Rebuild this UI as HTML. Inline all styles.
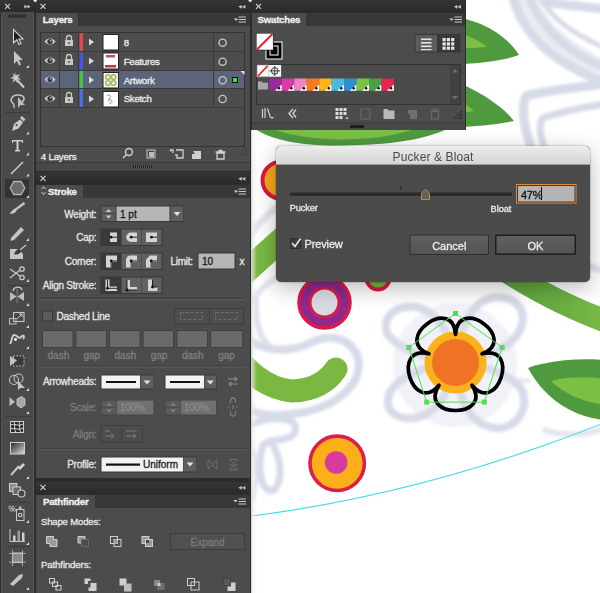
<!DOCTYPE html>
<html><head><meta charset="utf-8">
<style>
*{margin:0;padding:0;box-sizing:border-box}
html,body{width:600px;height:593px;overflow:hidden;background:#fff;font-family:"Liberation Sans",sans-serif}
.a{position:absolute}
#canvas{position:absolute;left:0;top:0;width:600px;height:593px}
.hdr{position:absolute;background:linear-gradient(#353535,#2a2a2a);height:12px}
.x{position:absolute;color:#d0d0d0;font-size:11px;line-height:11px;font-weight:bold}
.tabbar{position:absolute;background:#383838;height:14px}
.tab{position:absolute;background:#4c4c4c;color:#f0f0f0;font-size:11px;font-weight:bold;line-height:14px;padding-left:5px}
.body{position:absolute;background:#4c4c4c}
.lbl{position:absolute;color:#e6e6e6;font-size:10.5px;line-height:12px;white-space:nowrap}
.dis{color:#7a7a7a}
.t{position:absolute;white-space:nowrap;line-height:1;-webkit-text-stroke:0.3px currentColor}
.tt{font-size:9.7px;font-weight:bold;color:#f2f2f2;letter-spacing:-0.25px}
.btn{position:absolute;background:#5c5c5c;border:1px solid #3a3a3a}
</style></head><body>
<svg id="canvas" width="600" height="593" viewBox="0 0 600 593">
<defs><filter id="bl" x="-20%" y="-20%" width="140%" height="140%"><feGaussianBlur stdDeviation="1.7"/></filter>
<filter id="bl2" x="-20%" y="-20%" width="140%" height="140%"><feGaussianBlur stdDeviation="0.6"/></filter></defs>
<rect x="0" y="0" width="600" height="593" fill="#ffffff"/>
<g fill="none" stroke="#cdd1e2" stroke-linecap="round" stroke-linejoin="round" filter="url(#bl)" opacity="0.8">
 <!-- top-right swirl -->
 <path d="M521 -8 C532 25 556 50 605 73" stroke-width="24" stroke="#e3e6ef"/>
 <path d="M512 -5 C520 25 540 50 570 66 C585 74 595 80 605 84" stroke-width="9"/>
 <path d="M528 -5 C538 20 555 40 580 55 C590 61 598 66 605 68" stroke-width="8"/>
 <path d="M540 -2 C552 18 570 32 605 48" stroke-width="5"/>
 <path d="M545 2 C565 5 585 7 605 9" stroke-width="9"/>
 <path d="M605 84 C575 88 545 90 526 96 C520 110 525 130 532 150" stroke-width="9"/>
 <path d="M605 104 C580 108 560 112 543 118 C538 125 540 135 545 150" stroke-width="7"/>
 <!-- halo around C -->
 <path d="M252 232 C260 222 268 214 276 208" stroke-width="7" opacity="0.7"/><path d="M252 300 C258 292 266 284 276 278" stroke-width="6" opacity="0.7"/>
 <path d="M252 342 C270 352 292 352 310 343 C328 334 348 336 357 355 C366 380 340 406 300 413 C278 417 262 415 251 411" stroke-width="8"/>
 <path d="M256 300 C255 320 258 335 268 345" stroke-width="6" opacity="0.8"/>
 <!-- quatrefoil behind flower -->
 <circle cx="455" cy="365" r="62" fill="#e9ebf2" stroke="none" opacity="0.8"/>
 <path d="M455 362 C430 360 400 350 388 335 C380 318 395 305 415 307 C435 310 450 330 455 362 Z" stroke-width="8"/>
 <path d="M455 362 C460 330 470 300 495 297 C518 296 528 312 520 330 C510 350 480 360 455 362 Z" stroke-width="8"/>
 <path d="M455 362 C430 365 400 375 390 392 C383 410 395 420 415 418 C435 415 450 395 455 362 Z" stroke-width="8"/>
 <path d="M455 362 C480 365 510 372 522 390 C530 410 515 430 495 428 C470 425 458 400 455 362 Z" stroke-width="8"/>
 <!-- bottom-left petal sketch -->
 <path d="M252 424 C272 416 300 416 295 432 C290 442 272 438 263 445 C256 470 262 495 274 490 C284 480 281 455 270 441" stroke-width="7"/>
 <path d="M252 450 C258 465 258 480 252 500" stroke-width="5" opacity="0.7"/>
 <!-- right misc -->
 <path d="M560 265 C575 260 590 266 605 272" stroke-width="7" opacity="0.7"/>
 <path d="M545 430 C560 436 585 436 605 428" stroke-width="6" opacity="0.7"/><path d="M518 380 L528 381" stroke-width="5" opacity="0.6"/>
</g>
<!-- top leaf peeking below swatches -->
<path d="M251 95 L470 95 L470 120 L449 128 C425 140 390 145 340 145.5 C300 146 270 140 252 127 Z" fill="#4f9a3f"/>
<path d="M266 100 L418 100 L418 128 C395 136 370 139.5 340 139.5 C312 139.5 288 135 266 127 Z" fill="#7cbf45"/>
<!-- leaves right of swatches -->
<path d="M462 18 C490 25 508 38 519 55 C505 60 485 63 462 64 Z" fill="#4f9a3f"/>
<path d="M462 34 C475 38 482 43 487 47 C478 48 470 48 462 48 Z" fill="#7cbf45"/>
<path d="M462 84 C485 95 503 107 514 121 C500 124 482 126 462 127 Z" fill="#4f9a3f"/>
<path d="M462 102 C467 105 470 108 474 111 C470 112 466 112 462 112 Z" fill="#7cbf45"/>
<!-- orange ring top-left -->
<circle cx="281" cy="180.2" r="18.5" fill="#f6a81c" stroke="#d7193f" stroke-width="4"/>
<!-- green band ring left -->
<path d="M222 293 L300 222.7" fill="none" stroke="#7ab842" stroke-width="24"/><path d="M230 348 Q258 388 292 391 Q322 390 336 369" fill="none" stroke="#7ab842" stroke-width="23" stroke-linecap="round"/>
<!-- purple ring -->
<circle cx="324.5" cy="302.5" r="20" fill="none" stroke="#8c2a8f" stroke-width="9"/>
<circle cx="324.5" cy="302.5" r="25.5" fill="none" stroke="#d91a4a" stroke-width="3.5"/>
<circle cx="324.5" cy="302.5" r="14.5" fill="#d9dbe2" stroke="#d91a4a" stroke-width="3"/>
<!-- small green ring -->
<circle cx="378" cy="278" r="11.5" fill="#7ab842" stroke="#d91a4a" stroke-width="4"/>
<!-- green band right -->
<defs><linearGradient id="bandg" x1="500" y1="0" x2="600" y2="0" gradientUnits="userSpaceOnUse"><stop offset="0" stop-color="#58a03e"/><stop offset="1" stop-color="#78b945"/></linearGradient></defs><path d="M460 240 C500 268 550 303 620 326" fill="none" stroke="url(#bandg)" stroke-width="23"/>
<!-- right leaf -->
<path d="M528 368 C550 360 580 358 605 360 L605 420 C575 418 545 400 528 368 Z" fill="#4f9a3f"/>
<path d="M551 381 C570 376 590 377 605 379 L605 405 C585 402 565 395 551 381 Z" fill="#7cbf45"/>
<!-- flower -->
<circle cx="455.5" cy="362.5" r="31" fill="#f9b21b"/>
<circle cx="455.5" cy="362.5" r="23.5" fill="#f07224"/>
<path d="M455.5 334.5 C457.9 294.5 519.4 339.2 482.1 353.8 C520.9 343.8 497.4 416.1 472.0 385.2 C493.5 418.9 417.5 418.9 439.0 385.2 C413.6 416.1 390.1 343.8 428.9 353.8 C391.6 339.2 453.1 294.5 455.5 334.5Z" fill="none" stroke="#000" stroke-width="3.7" stroke-linejoin="round"/>
<polygon points="455.5,313.5 502.1,347.4 484.3,402.1 426.7,402.1 408.9,347.4" fill="none" stroke="#4ee04e" stroke-width="1"/>
<g fill="#4ee04e"><rect x="453" y="311" width="5" height="5"/><rect x="499.6" y="344.9" width="5" height="5"/><rect x="481.8" y="399.6" width="5" height="5"/><rect x="424.2" y="399.6" width="5" height="5"/><rect x="406.4" y="344.9" width="5" height="5"/></g>
<!-- bottom circle -->
<circle cx="337.2" cy="463.3" r="27.2" fill="#fbb01a" stroke="#dc1f4a" stroke-width="3.6"/>
<circle cx="336.2" cy="462.5" r="11.3" fill="#d93aa0"/>
<!-- cyan arc -->
<path d="M250 516.3 Q427.5 493.6 605 422.5" fill="none" stroke="#47dbe9" stroke-width="1.1"/>
</svg>

<!-- toolbar -->
<div class="a" style="left:0;top:0;width:36px;height:593px;background:#2e2e2e"></div>
<div class="a" style="left:1px;top:12px;width:33px;height:581px;background:#4a4a4a;border-left:1px solid #555;border-right:1px solid #575757"></div>
<div class="hdr" style="left:0;top:0;width:35px"></div>
<svg class="a" style="left:0;top:0" width="36" height="593" viewBox="0 0 36 593">
 <g stroke="#d4d4d4" stroke-width="1.1" fill="none"><path d="M5 3.8l5 5M10 3.8l-5 5"/></g>
 <g fill="#c8c8c8"><path d="M24.3 4.7l3.1 1.95-3.1 1.95z M27.4 4.7l3.1 1.95-3.1 1.95z"/></g>
 <g fill="#1e1e1e"><rect x="8.5" y="14.5" width="1.2" height="3.2"/><rect x="10.5" y="14.5" width="1.2" height="3.2"/><rect x="12.5" y="14.5" width="1.2" height="3.2"/><rect x="14.5" y="14.5" width="1.2" height="3.2"/><rect x="16.5" y="14.5" width="1.2" height="3.2"/><rect x="18.5" y="14.5" width="1.2" height="3.2"/><rect x="20.5" y="14.5" width="1.2" height="3.2"/><rect x="22.5" y="14.5" width="1.2" height="3.2"/><rect x="24.5" y="14.5" width="1.2" height="3.2"/></g>
 <g stroke="#3c3c3c" stroke-width="1"><line x1="5" y1="112.5" x2="30" y2="112.5"/><line x1="5" y1="285.5" x2="30" y2="285.5"/><line x1="5" y1="416.5" x2="30" y2="416.5"/><line x1="5" y1="502.5" x2="30" y2="502.5"/><line x1="5" y1="546.5" x2="30" y2="546.5"/></g>
 <rect x="5" y="179" width="24" height="19" fill="#343434"/>
 <!-- selection -->
 <path d="M13.5 29.5 L13.5 43 L16.8 39.8 L19 44.5 L21 43.5 L18.8 39 L23 39 Z" fill="#1e1e1e" stroke="#d4d4d4" stroke-width="1.1"/>
 <!-- direct selection -->
 <path d="M14 51 L14 64 L17 61 L19 65.5 L21 64.5 L19 60 L23 60 Z" fill="#c4c4c4"/>
 <!-- magic wand -->
 <g fill="#c8c8c8"><path d="M15.5 72l1.2 3.5 3.6-1.4-2.3 3.1 3.1 2.2-3.7 0.2 0.2 3.7-2.2-3-3 2.3 1.3-3.6-3.6-1.2 3.6-1.1-1.3-3.6 3 2.3z"/></g>
 <path d="M17 80 L24 87.5" stroke="#c8c8c8" stroke-width="2.2"/>
 <!-- lasso -->
 <g fill="none" stroke="#c4c4c4" stroke-width="1.5"><path d="M14 104 C9 101 11 95 18 95 C24 95 26 99 22 102"/><path d="M14 104 C13 107 15 107 14 108"/></g>
 <path d="M18 97 L18 108 L20.5 105 L25 105 Z" fill="#bdbdbd"/>
 <!-- pen -->
 <path d="M12 131 L14 124 L20 119.5 L23 122.5 L18.5 128.5 Z" fill="#c8c8c8"/>
 <path d="M20 118 L22 116 L25.5 119.5 L23.5 121.5 Z" fill="#c8c8c8"/>
 <circle cx="16.5" cy="125" r="0.9" fill="#333"/>
 <!-- T -->
 <path d="M12 140 H23 V143 H22 V141.5 H18.5 V150 H20 V151.5 H15 V150 H16.5 V141.5 H13 V143 H12 Z" fill="#cfcfcf"/>
 <!-- line -->
 <path d="M11 174 L23 162" stroke="#cfcfcf" stroke-width="1.4"/>
 <!-- polygon -->
 <path d="M13.8 181.5 H21.2 L24.8 188 L21.2 194.5 H13.8 L10.2 188 Z" fill="#6a6a6a" stroke="#b4b4b4" stroke-width="1.3"/>
 <!-- brush -->
 <path d="M15 210 L24.5 203" stroke="#c4c4c4" stroke-width="2.2"/>
 <path d="M9.5 214 C12 211 14 208 16 209 C17.5 211 15 214 9.5 214 Z" fill="#c8c8c8"/>
 <!-- pencil -->
 <path d="M11 238 L21 227 L24 230 L14 240 L10.5 241 Z" fill="#c4c4c4"/>
 <!-- blob brush -->
 <path d="M10 249 H19 L23 254 V259 H10 Z" fill="#c4c4c4"/>
 <path d="M14 254 C16 249 21 247 23 248 C22 252 18 256 14 254 Z" fill="#3c3c3c"/>
 <path d="M20 250 L26 245" stroke="#c4c4c4" stroke-width="1.3"/>
 <!-- scissors -->
 <g fill="none" stroke="#c8c8c8" stroke-width="1.3"><circle cx="22" cy="269" r="2.2"/><circle cx="22" cy="277.5" r="2.2"/><path d="M10 269 L20 276 M10 278 L20 270"/></g>
 <!-- reflect -->
 <path d="M10 292 L16.5 296.5 L10 301 Z M24 292 L17.5 296.5 L24 301 Z" fill="#bdbdbd"/>
 <path d="M13 291 C14 286 21 286 22 290" fill="none" stroke="#c8c8c8" stroke-width="1.3"/>
 <path d="M17 287 V303" stroke="#c8c8c8" stroke-width="0.8" stroke-dasharray="1.2 1.2"/>
 <!-- scale -->
 <rect x="13.5" y="312.5" width="10.5" height="9" fill="none" stroke="#c8c8c8" stroke-width="1.1"/>
 <rect x="9.5" y="318.5" width="6.5" height="5.5" fill="none" stroke="#bcbcbc" stroke-width="1"/>
 <path d="M17 319 L22 314 M19 314 H22 V317" stroke="#c8c8c8" stroke-width="1" fill="none"/>
 <!-- warp -->
 <path d="M10 344 C13 339 11 336 14 335 C17 334 18 340 21 337 C24 334 25 337 23 339" fill="none" stroke="#c8c8c8" stroke-width="2"/>
 <circle cx="15.5" cy="339.5" r="1.4" fill="#fff"/>
 <!-- free transform -->
 <rect x="13.5" y="356" width="10.5" height="10" fill="#3a3a3a" stroke="#c8c8c8" stroke-width="1" stroke-dasharray="1.5 1.5"/>
 <path d="M10 356 L17 360.5 L10 366 Z" fill="#c4c4c4"/>
 <!-- shape builder -->
 <g fill="none" stroke="#c4c4c4" stroke-width="1.1"><circle cx="14" cy="380" r="4.5"/><circle cx="18.5" cy="378.5" r="4.5"/></g>
 <path d="M18 381 L18 390 L20.5 388 L25 388 Z" fill="#c4c4c4"/>
 <!-- perspective -->
 <path d="M9.5 397 L15 402 L9.5 406 Z" fill="#bdbdbd"/>
 <path d="M17 399 L21.5 396.5 L25 399 L25 405 L21 408 L17 405 Z" fill="#a8a8a8" stroke="#cfcfcf" stroke-width="0.8"/>
 <!-- mesh -->
 <rect x="10.5" y="421.5" width="13" height="11" fill="#2a2a2a" stroke="#cfcfcf" stroke-width="1"/>
 <path d="M11 425 C14 423 18 427 23 424 M11 429 C14 427 18 431 23 428 M14 422 C16 426 13 429 16 432 M19 422 C21 426 18 429 21 432" stroke="#e0e0e0" stroke-width="1" fill="none"/>
 <!-- gradient -->
 <defs><linearGradient id="gr" x1="0" x2="1" y1="0" y2="1"><stop offset="0" stop-color="#222"/><stop offset="1" stop-color="#ddd"/></linearGradient></defs>
 <rect x="10.5" y="442.5" width="14" height="11.5" fill="url(#gr)" stroke="#cfcfcf" stroke-width="1"/>
 <!-- eyedropper -->
 <path d="M11 475 L19 466" stroke="#c8c8c8" stroke-width="2" />
 <path d="M18 468 L23 463 L25 465 L20 470 Z" fill="#d0d0d0"/>
 <!-- blend -->
 <rect x="9.5" y="483.5" width="7.5" height="8" fill="#8c8c8c" stroke="#d0d0d0" stroke-width="1"/>
 <rect x="13" y="487" width="7.5" height="7.5" fill="#6a6a6a" stroke="#c8c8c8" stroke-width="1"/>
 <circle cx="21.5" cy="493.5" r="3.5" fill="#444" stroke="#c8c8c8" stroke-width="1.2"/>
 <!-- symbol sprayer -->
 <g fill="none" stroke="#bbbbbb" stroke-width="0.9"><circle cx="10" cy="507.5" r="1.3"/><circle cx="13" cy="507.5" r="1.3"/><circle cx="11.5" cy="510" r="1.3"/><circle cx="14.5" cy="510" r="1.3"/></g>
 <rect x="16.5" y="509.5" width="7.5" height="11" fill="none" stroke="#c8c8c8" stroke-width="1"/>
 <rect x="19" y="506.5" width="2.5" height="3" fill="#bbb"/>
 <circle cx="20.2" cy="515" r="1.8" fill="none" stroke="#d0d0d0" stroke-width="1.1"/>
 <!-- graph -->
 <path d="M10 529 V541.5 H25" stroke="#c8c8c8" stroke-width="1" fill="none"/>
 <rect x="13" y="535.5" width="2.5" height="5.5" fill="#cfcfcf"/><rect x="17.5" y="530.5" width="2.5" height="10.5" fill="#9a9a9a"/><rect x="22" y="532.5" width="2.5" height="8.5" fill="#cfcfcf"/>
 <!-- artboard -->
 <rect x="12.5" y="553" width="10" height="9.5" fill="#8a8a8a" stroke="#cfcfcf" stroke-width="1"/>
 <path d="M9 553.5 H26 M9 562 H26 M12.5 550 V566 M22.5 550 V566" stroke="#bdbdbd" stroke-width="0.8"/>
 <!-- slice -->
 <path d="M10 584 L19 575 L23 574 L22 578 L13 586 Z" fill="#c4c4c4"/>
 <!-- flyout triangles -->
 <g fill="#d8d8d8"><path d="M29 65 v3h-3z M29 131.5 v3h-3z M29 152.5 v3h-3z M29 173.5 v3h-3z M29 195 v3h-3z M29 238 v3h-3z M29 279 v3h-3z M29 303 v3h-3z M29 325 v3h-3z M29 346 v3h-3z M29 388 v3h-3z M29 411 v3h-3z M29 476 v3h-3z M29 520 v3h-3z M29 542 v3h-3z M29 587 v3h-3z"/></g>
</svg>

<!-- panel column -->
<div class="a" style="left:35px;top:0;width:216px;height:593px;background:#2c2c2c"></div>

<!-- Layers -->
<div class="hdr" style="left:36px;top:0;width:214px"></div>
<div class="tabbar" style="left:36px;top:12.5px;width:214px"></div>
<div class="tab" style="left:36px;top:12.5px;width:42px;height:14px"></div><div class="t tt" style="left:42.7px;top:15.3px">Layers</div>
<div class="body" style="left:36px;top:26px;width:214px;height:136px"></div>
<div class="a" style="left:36px;top:162px;width:214px;height:9px;background:#484848;border-top:1px solid #3a3a3a"></div>

<svg class="a" style="left:36px;top:0" width="214" height="26" viewBox="0 0 214 26">
 <g stroke="#d4d4d4" stroke-width="1.1" fill="none"><path d="M4.5 3.8l5 5M9.5 3.8l-5 5"/></g>
 <g fill="#c8c8c8"><path d="M205.8 4.9l-3.5 1.95 3.5 1.95z M209.4 4.9l-3.5 1.95 3.5 1.95z"/></g>
 <path d="M198 18.5 h4 l-2 2.5z" fill="#d0d0d0"/><g stroke="#c8c8c8" stroke-width="1"><line x1="202.5" y1="17" x2="210" y2="17"/><line x1="202.5" y1="19.5" x2="210" y2="19.5"/><line x1="202.5" y1="22" x2="210" y2="22"/></g>
</svg>
<!-- layer table -->
<div class="a" style="left:40px;top:32px;width:205px;height:115px;background:#4d4d4d;border:1px solid #333"></div>
<div class="a" style="left:41px;top:70px;width:203px;height:19px;background:#5b6479"></div>
<svg class="a" style="left:36px;top:26px" width="214" height="136" viewBox="0 0 214 136">
 <g stroke="#3a3a3a" stroke-width="1"><line x1="5" y1="25.5" x2="209" y2="25.5"/><line x1="5" y1="44.5" x2="209" y2="44.5"/><line x1="5" y1="62.5" x2="209" y2="62.5"/><line x1="5" y1="81.5" x2="209" y2="81.5"/>
 <line x1="23.5" y1="7" x2="23.5" y2="81"/><line x1="42.5" y1="7" x2="42.5" y2="81"/><line x1="177.5" y1="7" x2="177.5" y2="81"/></g>
 <rect x="43.5" y="7" width="3.5" height="18" fill="#e14a48"/>
 <rect x="43.5" y="26" width="3.5" height="18" fill="#4455e0"/>
 <rect x="43.5" y="45" width="3.5" height="17" fill="#44c644"/>
 <rect x="43.5" y="63" width="3.5" height="18" fill="#4a6fe0"/>
 <!-- eyes -->
 <g id="eye"><path d="M8.5 15.5 C11 11.5 17 11.5 19.5 15.5 C17 19.5 11 19.5 8.5 15.5Z" fill="#c8c8c8"/><circle cx="14" cy="15.5" r="2.6" fill="#3a3a3a"/><circle cx="14.7" cy="14.7" r="0.8" fill="#ddd"/></g>
 <g transform="translate(0,19)"><path d="M8.5 15.5 C11 11.5 17 11.5 19.5 15.5 C17 19.5 11 19.5 8.5 15.5Z" fill="#c8c8c8"/><circle cx="14" cy="15.5" r="2.6" fill="#3a3a3a"/><circle cx="14.7" cy="14.7" r="0.8" fill="#ddd"/></g><g transform="translate(0,38)"><path d="M8.5 15.5 C11 11.5 17 11.5 19.5 15.5 C17 19.5 11 19.5 8.5 15.5Z" fill="#c8c8c8"/><circle cx="14" cy="15.5" r="2.6" fill="#3a3a3a"/><circle cx="14.7" cy="14.7" r="0.8" fill="#ddd"/></g><g transform="translate(0,57)"><path d="M8.5 15.5 C11 11.5 17 11.5 19.5 15.5 C17 19.5 11 19.5 8.5 15.5Z" fill="#c8c8c8"/><circle cx="14" cy="15.5" r="2.6" fill="#3a3a3a"/><circle cx="14.7" cy="14.7" r="0.8" fill="#ddd"/></g>
 <!-- locks -->
 <g id="lock"><path d="M30.5 14 v-2 a2.5 2.5 0 0 1 5 0 v2" fill="none" stroke="#c8c8c8" stroke-width="1.3"/><rect x="29" y="14" width="8" height="6" fill="#c8c8c8"/><rect x="32.3" y="16" width="1.4" height="2" fill="#555"/></g>
 <g transform="translate(0,19)"><path d="M30.5 14 v-2 a2.5 2.5 0 0 1 5 0 v2" fill="none" stroke="#c8c8c8" stroke-width="1.3"/><rect x="29" y="14" width="8" height="6" fill="#c8c8c8"/><rect x="32.3" y="16" width="1.4" height="2" fill="#555"/></g><g transform="translate(0,57)"><path d="M30.5 14 v-2 a2.5 2.5 0 0 1 5 0 v2" fill="none" stroke="#c8c8c8" stroke-width="1.3"/><rect x="29" y="14" width="8" height="6" fill="#c8c8c8"/><rect x="32.3" y="16" width="1.4" height="2" fill="#555"/></g>
 <!-- arrows -->
 <g fill="#dcdcdc"><path d="M53 12.5 l5 3.5 -5 3.5z"/><path d="M53 31.5 l5 3.5 -5 3.5z"/><path d="M53 50.5 l5 3.5 -5 3.5z"/><path d="M53 69.5 l5 3.5 -5 3.5z"/></g>
 <!-- thumbs -->
 <rect x="67" y="8.5" width="15.5" height="15.5" fill="#fff" stroke="#222" stroke-width="1"/>
 <rect x="67" y="27" width="15.5" height="16" fill="#fff" stroke="#222" stroke-width="1"/>
 <rect x="70" y="29" width="9" height="2.5" fill="#d24a5a"/><rect x="69" y="39" width="11" height="2.5" fill="#c8303e"/>
 <rect x="67" y="46.5" width="15.5" height="15.5" fill="#f4f4e8" stroke="#222" stroke-width="1"/>
 <g fill="none" stroke="#a8b868" stroke-width="1.6"><circle cx="72" cy="51" r="2.3"/><circle cx="77.5" cy="51" r="2.3"/><circle cx="72" cy="57" r="2.3"/><circle cx="77.5" cy="57" r="2.3"/></g>
 <rect x="67" y="65.5" width="15.5" height="15.5" fill="#fff" stroke="#222" stroke-width="1"/>
 <path d="M71 69 c4 0 5 2 2 4 c4 1 4 4 0 5 M74 72 c-2 1 -2 3 0 4" fill="none" stroke="#7a90c8" stroke-width="1"/>
 <!-- target circles -->
 <g fill="none" stroke="#c4c4c4" stroke-width="1.4"><circle cx="186.6" cy="16.7" r="3.6"/><circle cx="186.6" cy="35.7" r="3.6"/><circle cx="186.6" cy="54.2" r="3.6"/><circle cx="186.6" cy="73" r="3.6"/></g>
 <rect x="196.5" y="51.5" width="5" height="5" fill="#44dd44" stroke="#111" stroke-width="1"/>
 <path d="M204.5 45 h4 v4z" fill="#e8e8e8"/>
 <!-- footer icons -->
 <g fill="none" stroke="#cfcfcf" stroke-width="1.4"><circle cx="93" cy="126" r="3.5"/><path d="M90.5 128.5 L87 132"/></g>
 <g fill="#bdbdbd"><rect x="111" y="124" width="8" height="8" fill="none" stroke="#c8c8c8" stroke-width="1"/><rect x="113" y="126" width="5" height="5"/></g>
 <path d="M134 124 h3 v3 M135 125.5 l-1 -1.5 M140 124 h7 v8 h-6 v-3 h-2" fill="none" stroke="#d0d0d0" stroke-width="1.3"/>
 <path d="M157 125 h8 v8 h-9 v-5 h3z" fill="#d0d0d0"/>
 <path d="M179.5 126 h10 M181 127 h7 v6 h-7z M182.5 124.5 h4" fill="none" stroke="#d0d0d0" stroke-width="1.3"/>
 <g fill="#3c3c3c"><path d="M210 122 v7 h-7z"/></g>
 <g stroke="#6a6a6a" stroke-width="0.8"><path d="M205 128.5 l4.5-4.5 M207 128.5 l2.5-2.5"/></g>
</svg>
<div class="t" style="left:123.7px;top:38.3px;font-size:9.7px;color:#ececec;letter-spacing:-0.3px">8</div>
<div class="t" style="left:123.7px;top:57.2px;font-size:9.7px;color:#ececec;letter-spacing:-0.3px">Features</div>
<div class="t" style="left:123.7px;top:75.5px;font-size:9.7px;color:#ececec;letter-spacing:-0.3px">Artwork</div>
<div class="t" style="left:123.7px;top:94.3px;font-size:9.7px;color:#ececec;letter-spacing:-0.3px">Sketch</div>
<div class="t" style="left:40.8px;top:152.0px;font-size:9.7px;color:#ececec;letter-spacing:-0.2px">4 Layers</div>
<svg class="a" style="left:130px;top:164px" width="26" height="6"><g fill="#1e1e1e"><rect x="3" y="1" width="19" height="3"/></g><g fill="#5a5a5a"><rect x="4" y="1" width="1" height="3"/><rect x="6" y="1" width="1" height="3"/><rect x="8" y="1" width="1" height="3"/><rect x="10" y="1" width="1" height="3"/><rect x="12" y="1" width="1" height="3"/><rect x="14" y="1" width="1" height="3"/><rect x="16" y="1" width="1" height="3"/><rect x="18" y="1" width="1" height="3"/><rect x="20" y="1" width="1" height="3"/></g></svg>

<!-- Stroke -->
<div class="hdr" style="left:36px;top:172px;width:214px"></div>
<div class="tabbar" style="left:36px;top:184.5px;width:214px"></div>
<div class="tab" style="left:36px;top:184.5px;width:46.5px;height:14px"></div><div class="t tt" style="left:48px;top:187.0px">Stroke</div>
<div class="body" style="left:36px;top:198px;width:214px;height:280px"></div>

<svg class="a" style="left:36px;top:172px" width="214" height="26" viewBox="0 0 214 26">
 <g stroke="#d4d4d4" stroke-width="1.1" fill="none"><path d="M4.5 3.8l5 5M9.5 3.8l-5 5"/></g>
 <g fill="#c8c8c8"><path d="M205.8 4.9l-3.5 1.95 3.5 1.95z M209.4 4.9l-3.5 1.95 3.5 1.95z"/></g>
 <path d="M198 18.5 h4 l-2 2.5z" fill="#d0d0d0"/><g stroke="#c8c8c8" stroke-width="1"><line x1="202.5" y1="17" x2="210" y2="17"/><line x1="202.5" y1="19.5" x2="210" y2="19.5"/><line x1="202.5" y1="22" x2="210" y2="22"/></g>
 <path d="M5.5 17 l2 -2.5 2 2.5 M5.5 20 l2 2.5 2 -2.5" fill="none" stroke="#d0d0d0" stroke-width="1"/>
</svg>
<div class="t" style="right:503.7px;top:210.1px;font-size:10.0px;color:#e6e6e6;letter-spacing:-0.25px">Weight:</div>
<div class="t" style="right:503.7px;top:232.8px;font-size:10.0px;color:#e6e6e6;letter-spacing:-0.25px">Cap:</div>
<div class="t" style="right:503.7px;top:256.9px;font-size:10.0px;color:#e6e6e6;letter-spacing:-0.25px">Corner:</div>
<div class="t" style="right:503.7px;top:280.5px;font-size:10.0px;color:#e6e6e6;letter-spacing:-0.25px">Align Stroke:</div>
<div class="t" style="left:170.5px;top:256.9px;font-size:10.0px;color:#e6e6e6;letter-spacing:-0.25px">Limit:</div>
<div class="t" style="left:239.5px;top:256.9px;font-size:10.0px;color:#e6e6e6;letter-spacing:-0.25px">x</div>
<div class="t" style="left:56.5px;top:311.8px;font-size:10.0px;color:#e6e6e6;letter-spacing:-0.25px">Dashed Line</div>
<div class="t" style="right:503.7px;top:376.9px;font-size:10.0px;color:#e6e6e6;letter-spacing:-0.25px">Arrowheads:</div>
<div class="t" style="right:503.7px;top:403.4px;font-size:10.0px;color:#7c7c7c;letter-spacing:-0.25px">Scale:</div>
<div class="t" style="right:503.7px;top:429.5px;font-size:10.0px;color:#7c7c7c;letter-spacing:-0.25px">Align:</div>
<div class="t" style="right:503.7px;top:460.4px;font-size:10.0px;color:#e6e6e6;letter-spacing:-0.25px">Profile:</div>
<div class="t" style="left:42.4px;width:32px;text-align:center;top:350.6px;font-size:10px;color:#808080">dash</div>
<div class="t" style="left:75.8px;width:32px;text-align:center;top:350.6px;font-size:10px;color:#808080">gap</div>
<div class="t" style="left:109.4px;width:32px;text-align:center;top:350.6px;font-size:10px;color:#808080">dash</div>
<div class="t" style="left:143.0px;width:32px;text-align:center;top:350.6px;font-size:10px;color:#808080">gap</div>
<div class="t" style="left:176.8px;width:32px;text-align:center;top:350.6px;font-size:10px;color:#808080">dash</div>
<div class="t" style="left:210.6px;width:32px;text-align:center;top:350.6px;font-size:10px;color:#808080">gap</div>
<svg class="a" style="left:36px;top:198px" width="214" height="280" viewBox="36 198 214 280">
 <!-- weight -->
 <rect x="100.5" y="205.5" width="83" height="16.5" fill="#383838"/>
 <rect x="101.5" y="206.5" width="14" height="14.5" fill="#5e5e5e"/>
 <path d="M105.5 212 l3-3 3 3z M105.5 215.5 l3 3 3-3z" fill="#c8c8c8"/>
 <rect x="101.5" y="213.3" width="14" height="0.8" fill="#444"/>
 <rect x="116.5" y="206.5" width="53" height="14.5" fill="#b6b6b6"/>
 <rect x="170.5" y="206.5" width="12.5" height="14.5" fill="#5e5e5e"/>
 <path d="M173.5 212 h7 l-3.5 4z" fill="#e0e0e0"/>
 <!-- cap/corner/align -->
 <g fill="#383838"><rect x="100.5" y="228.5" width="62" height="17.5"/><rect x="100.5" y="252.5" width="62" height="17.5"/><rect x="100.5" y="276.5" width="62" height="17.5"/></g>
 <g fill="#3a3a3a"><rect x="101.5" y="229.5" width="19" height="15.5"/><rect x="101.5" y="253.5" width="19" height="15.5"/><rect x="101.5" y="277.5" width="19" height="15.5"/></g>
 <g fill="#616161"><rect x="121.5" y="229.5" width="19.5" height="15.5"/><rect x="141.5" y="229.5" width="20" height="15.5"/><rect x="121.5" y="253.5" width="19.5" height="15.5"/><rect x="141.5" y="253.5" width="20" height="15.5"/><rect x="121.5" y="277.5" width="19.5" height="15.5"/><rect x="141.5" y="277.5" width="20" height="15.5"/></g>
 <g fill="#d4d4d4">
  <rect x="110" y="232.5" width="7" height="9.5"/>
  <path d="M131 232.5 h6 v9.5 h-6 a4.75 4.75 0 0 1 0-9.5z"/>
  <rect x="146" y="232.5" width="11" height="9.5"/>
  <path d="M106 255.5 h11 v6.5 h-5 v5.5 h-6z"/>
  <path d="M130.5 255.5 h6.5 v6.5 h-5 v5.5 h-6 v-7.5 a4.5 4.5 0 0 1 4.5-4.5z"/>
  <path d="M150 255.5 h7 v6.5 h-5 v5.5 h-6 v-8z"/>
  <path d="M105.5 279.5 h4 v7 h7.5 v4.5 h-11.5z"/>
  <path d="M127 280 h3 v7 h7 v3 h-10z"/>
  <path d="M148 279.5 h4.5 v7.5 h5 v4 h-9.5z"/>
 </g>
 <g stroke="#151515" stroke-width="0.9" fill="none">
  <path d="M110 237.2 h7 M131 237.2 h6 M151.5 237.2 h5.5"/>
  <path d="M111.2 267.5 v-6.5 h5.8 M131.2 267.5 v-6.5 h5.8 M151.2 267.5 v-6.5 h5.8"/>
  <path d="M107.5 279.5 v8.8 h9.5 M127 280 v10 h10 M152.5 279.5 v7.5 h5"/>
 </g>
 <g fill="#111"><circle cx="111" cy="237.2" r="1.4"/><circle cx="131.2" cy="237.2" r="1.4"/><circle cx="151.5" cy="237.2" r="1.4"/><circle cx="111.2" cy="261" r="1.4"/><circle cx="131.2" cy="261" r="1.4"/><circle cx="151.2" cy="261" r="1.4"/><circle cx="107.5" cy="288.3" r="1.4"/><circle cx="127" cy="290" r="1.4"/><circle cx="152.5" cy="287" r="1.4"/></g>
 <!-- limit -->
 <rect x="197.5" y="252.5" width="38" height="17" fill="#383838"/>
 <rect x="198.5" y="253.5" width="36" height="15" fill="#b6b6b6"/>
 <!-- separators -->
 <g fill="#3c3c3c"><rect x="40" y="298" width="206" height="1"/><rect x="40" y="365.5" width="206" height="1"/><rect x="40" y="448" width="206" height="1"/></g>
 <g fill="#5c5c5c"><rect x="40" y="299" width="206" height="1"/><rect x="40" y="366.5" width="206" height="1"/><rect x="40" y="449" width="206" height="1"/></g>
 <!-- dashed checkbox -->
 <rect x="42.5" y="311" width="10" height="10" fill="#5c5c5c" stroke="#363636" stroke-width="1"/>
 <!-- dashed align buttons -->
 <rect x="174.5" y="308.5" width="69" height="15.5" fill="#4e4e4e" stroke="#3e3e3e" stroke-width="1"/>
 <rect x="209" y="308.5" width="1" height="15.5" fill="#3e3e3e"/>
 <g fill="none" stroke="#707070" stroke-width="1" stroke-dasharray="3 2"><rect x="180.5" y="312.5" width="22" height="7"/><rect x="215.5" y="312.5" width="22" height="7"/></g>
 <!-- dash inputs -->
 <g fill="#6a6a6a" stroke="#404040" stroke-width="1">
  <rect x="42.5" y="330.5" width="30.5" height="17"/><rect x="75.9" y="330.5" width="30.5" height="17"/><rect x="109.5" y="330.5" width="30.5" height="17"/><rect x="143.1" y="330.5" width="30.5" height="17"/><rect x="176.9" y="330.5" width="30.5" height="17"/><rect x="210.7" y="330.5" width="32" height="17"/>
 </g>
 <!-- arrowheads -->
 <rect x="100.5" y="374.5" width="53.5" height="15" fill="#383838"/>
 <rect x="101.5" y="375.5" width="38.5" height="13" fill="#f2f2f2"/>
 <rect x="106" y="381" width="30" height="2" fill="#111"/>
 <rect x="140.5" y="375.5" width="13" height="13" fill="#5e5e5e"/>
 <path d="M143.5 380.5 h7 l-3.5 4z" fill="#e0e0e0"/>
 <rect x="164.5" y="374.5" width="52" height="15" fill="#383838"/>
 <rect x="165.5" y="375.5" width="38.5" height="13" fill="#f2f2f2"/>
 <rect x="170" y="381" width="30" height="2" fill="#111"/>
 <rect x="204.5" y="375.5" width="11.5" height="13" fill="#5e5e5e"/>
 <path d="M206.8 380.5 h7 l-3.5 4z" fill="#e0e0e0"/>
 <path d="M228 379 h9 M234.5 377 l2.5 2 -2.5 2 M238 384 h-9 M231.5 382 l-2.5 2 2.5 2" fill="none" stroke="#8a8a8a" stroke-width="1.2"/>
 <!-- scale -->
 <rect x="100.5" y="399.5" width="53.5" height="16" fill="#444"/>
 <rect x="101.5" y="400.5" width="15" height="14" fill="#5a5a5a"/>
 <rect x="101.5" y="407" width="15" height="0.8" fill="#4a4a4a"/>
 <path d="M106 405.5 l3-2.5 3 2.5z M106 409.5 l3 2.5 3-2.5z" fill="#858585"/>
 <rect x="117" y="400.5" width="36.5" height="14" fill="#707070"/>
 <rect x="164.5" y="399.5" width="52" height="16" fill="#444"/>
 <rect x="165.5" y="400.5" width="15" height="14" fill="#5a5a5a"/>
 <rect x="165.5" y="407" width="15" height="0.8" fill="#4a4a4a"/>
 <path d="M170 405.5 l3-2.5 3 2.5z M170 409.5 l3 2.5 3-2.5z" fill="#858585"/>
 <rect x="181" y="400.5" width="35" height="14" fill="#707070"/>
 <path d="M230.5 403 v-2.5 a2.5 2.5 0 0 1 5 0 v2.5 M230.5 411 v2.5 a2.5 2.5 0 0 0 5 0 v-2.5 M233 405 v4" fill="none" stroke="#7a7a7a" stroke-width="1.3"/>
 <path d="M228 407 h2 M236 407 h2" stroke="#7a7a7a" stroke-width="1"/>
 <!-- align -->
 <rect x="100.5" y="425.5" width="42" height="16.5" fill="#4c4c4c" stroke="#3e3e3e" stroke-width="1"/>
 <rect x="121" y="425.5" width="1" height="16.5" fill="#3e3e3e"/>
 <path d="M105 431 h5 M105 436 h9 M111 433.5 l3 2.5 -3 2.5 M126 431 h10 M126 436 h10 M133 433.5 l3 2.5 -3 2.5" fill="none" stroke="#7a7a7a" stroke-width="1"/>
 <!-- profile -->
 <rect x="100.5" y="456.5" width="96.5" height="16" fill="#383838"/>
 <rect x="101.5" y="457.5" width="81.5" height="14" fill="#f2f2f2"/>
 <rect x="106" y="463.5" width="34" height="2.2" fill="#111"/>
 <rect x="183.5" y="457.5" width="13" height="14" fill="#5e5e5e"/>
 <path d="M186.5 462.5 h7 l-3.5 4z" fill="#e0e0e0"/>
 <path d="M208 460 v9 l5-4.5z M217 460 v9 l-5-4.5z" fill="none" stroke="#6e6e6e" stroke-width="1"/>
 <path d="M229 459.5 h9 l-4.5 4z M229 470 h9 l-4.5-4z M229 465 h9" fill="none" stroke="#6e6e6e" stroke-width="1"/>
</svg>
<div class="t" style="left:120px;top:210.1px;font-size:10px;color:#1a1a1a">1 pt</div>
<div class="t" style="left:202px;top:256.9px;font-size:10px;color:#1a1a1a">10</div>
<div class="t" style="left:120px;top:403.4px;font-size:10px;color:#8a8a8a;letter-spacing:-0.2px">100%</div>
<div class="t" style="left:184px;top:403.4px;font-size:10px;color:#8a8a8a;letter-spacing:-0.2px">100%</div>
<div class="t" style="left:143px;top:460.4px;font-size:10px;color:#1a1a1a">Uniform</div>
<!-- Pathfinder -->
<div class="hdr" style="left:36px;top:482px;width:214px"></div>
<div class="tabbar" style="left:36px;top:494.5px;width:214px"></div>
<div class="tab" style="left:36px;top:494.5px;width:59.2px;height:14px"></div><div class="t tt" style="left:43px;top:496.6px">Pathfinder</div>
<div class="body" style="left:36px;top:508px;width:214px;height:85px"></div>

<svg class="a" style="left:36px;top:481px" width="214" height="27" viewBox="0 0 214 27">
 <g stroke="#d4d4d4" stroke-width="1.1" fill="none"><path d="M4.5 3.8l5 5M9.5 3.8l-5 5"/></g>
 <g fill="#c8c8c8"><path d="M205.8 4.9l-3.5 1.95 3.5 1.95z M209.4 4.9l-3.5 1.95 3.5 1.95z"/></g>
 <path d="M197.5 19 h4 l-2 2.5z" fill="#d0d0d0"/><g stroke="#c8c8c8" stroke-width="1"><line x1="202.5" y1="18" x2="210" y2="18"/><line x1="202.5" y1="20.5" x2="210" y2="20.5"/><line x1="202.5" y1="23" x2="210" y2="23"/></g>
</svg>
<div class="t" style="left:41.0px;top:516.5px;font-size:9.6px;color:#e6e6e6;letter-spacing:-0.2px">Shape Modes:</div>
<div class="t" style="left:41.0px;top:560.3px;font-size:9.8px;color:#e6e6e6;letter-spacing:-0.2px">Pathfinders:</div>
<svg class="a" style="left:36px;top:508px" width="214" height="85" viewBox="36 508 214 85">
 <rect x="170.5" y="533.5" width="74" height="16" fill="#505050" stroke="#3c3c3c" stroke-width="1"/>
 <!-- unite -->
 <g stroke="#cfcfcf" stroke-width="1" fill="#9a9a9a"><path d="M46.5 536.5 h7 v3 h3.5 v7 h-7 v-3 h-3.5z"/></g>
 <!-- minus front -->
 <path d="M78 536.5 h7 v3 h-3.5 v3.5 h-3.5z" fill="#9a9a9a" stroke="#cfcfcf" stroke-width="1"/>
 <rect x="81.5" y="539.5" width="7" height="7" fill="none" stroke="#6a6a6a" stroke-width="1"/>
 <!-- intersect -->
 <g fill="none" stroke="#cfcfcf" stroke-width="1"><rect x="110.5" y="536.5" width="7" height="7"/><rect x="114" y="539.5" width="7" height="7"/></g>
 <rect x="114" y="539.5" width="3.5" height="4" fill="#9a9a9a"/>
 <!-- exclude -->
 <g fill="#9a9a9a" stroke="#cfcfcf" stroke-width="1"><rect x="142" y="536.5" width="7" height="7"/><rect x="145.5" y="539.5" width="7" height="7"/></g>
 <rect x="146" y="540" width="3" height="3" fill="#444"/>
 <!-- pathfinders -->
 <g fill="none" stroke="#cfcfcf" stroke-width="1"><rect x="49.5" y="578.5" width="5" height="4.5"/><rect x="52.5" y="582" width="5" height="4.5"/><rect x="56" y="585.5" width="5" height="4.5"/></g>
 <g fill="#cfcfcf"><path d="M84.5 578.5 h6 v2.5 h-2.5 v3 h-3.5z"/><path d="M90.5 583 h6 v8 h-8 v-3.5 h2z"/></g>
 <g fill="#cfcfcf"><rect x="119.5" y="578.5" width="7" height="7"/><rect x="124" y="583.5" width="7.5" height="8" fill="#bdbdbd"/></g>
 <g fill="#8a8a8a"><rect x="154" y="580" width="6" height="6"/><rect x="157.5" y="583" width="7" height="7" fill="#6e6e6e"/></g><rect x="157.5" y="583" width="3" height="3" fill="#d0d0d0"/>
 <g fill="none" stroke="#cfcfcf" stroke-width="1"><rect x="187.5" y="578.5" width="7" height="7"/><rect x="191" y="582" width="8" height="8"/></g>
 <g><rect x="223.5" y="578.5" width="7" height="7" fill="#5a5a5a" stroke="#444" stroke-width="1"/><path d="M231 582.5 h4.5 v8.5 h-8 v-4.5 h3.5z" fill="#cfcfcf"/></g>
</svg>
<div class="t" style="left:170px;width:75px;text-align:center;top:537.5px;font-size:10px;color:#7a7a7a">Expand</div>
<!-- Swatches -->
<div class="a" style="left:250px;top:0;width:216px;height:130px;background:#2c2c2c"></div>
<div class="hdr" style="left:252px;top:0;width:213px"></div>
<div class="tabbar" style="left:252px;top:12.5px;width:213px"></div>
<div class="tab" style="left:252px;top:12.5px;width:53.5px;height:14px"></div><div class="t tt" style="left:257.5px;top:15.2px">Swatches</div>
<div class="body" style="left:252px;top:26px;width:213px;height:97px"></div>

<svg class="a" style="left:250px;top:0" width="216" height="131" viewBox="250 0 216 131">
 <g stroke="#d4d4d4" stroke-width="1.1" fill="none"><path d="M256 3.8l5 5M261 3.8l-5 5"/></g>
 <g fill="#c8c8c8"><path d="M457.4 4.9l-3.5 1.95 3.5 1.95z M461 4.9l-3.5 1.95 3.5 1.95z"/></g>
 <path d="M449.5 18.5 h4 l-2 2.5z" fill="#d0d0d0"/><g stroke="#c8c8c8" stroke-width="1"><line x1="454.5" y1="17" x2="462" y2="17"/><line x1="454.5" y1="19.5" x2="462" y2="19.5"/><line x1="454.5" y1="22" x2="462" y2="22"/></g>
 <!-- stroke swatch -->
 <rect x="265.5" y="41.5" width="17" height="18" fill="#fff"/>
 <rect x="266.5" y="42.5" width="15" height="16" fill="#000"/>
 <rect x="270" y="46" width="8" height="9" fill="none" stroke="#fff" stroke-width="1"/>
 <rect x="271.5" y="47.5" width="5" height="6" fill="#000"/>
 <!-- fill swatch -->
 <rect x="256" y="33" width="17.5" height="17.3" fill="#2a2a2a"/>
 <rect x="256.6" y="33.6" width="16.3" height="16.1" fill="#fff"/>
 <path d="M257 49.5 L272.5 34" stroke="#e0202a" stroke-width="2"/>
 <!-- view buttons -->
 <rect x="414.5" y="34" width="46" height="18.5" fill="#363636"/>
 <rect x="415.5" y="35" width="21.5" height="16.5" fill="#5c5c5c"/>
 <rect x="437.5" y="35" width="22" height="16.5" fill="#383838"/>
 <g fill="#e6e6e6"><rect x="421" y="38.5" width="10.5" height="1.6"/><rect x="421" y="42" width="10.5" height="1.6"/><rect x="421" y="45.5" width="10.5" height="1.6"/><rect x="421" y="49" width="10.5" height="1.2"/></g>
 <g fill="#e6e6e6"><rect x="442.5" y="38" width="3.2" height="3.2"/><rect x="446.8" y="38" width="3.2" height="3.2"/><rect x="451.1" y="38" width="3.2" height="3.2"/><rect x="442.5" y="42.3" width="3.2" height="3.2"/><rect x="446.8" y="42.3" width="3.2" height="3.2"/><rect x="451.1" y="42.3" width="3.2" height="3.2"/><rect x="442.5" y="46.6" width="3.2" height="3.2"/><rect x="446.8" y="46.6" width="3.2" height="3.2"/><rect x="451.1" y="46.6" width="3.2" height="3.2"/></g>
 <!-- list box -->
 <rect x="256.5" y="64.5" width="204" height="40" fill="#4b4b4b" stroke="#333" stroke-width="1"/>
 <rect x="450" y="65" width="10" height="39" fill="#424242"/>
 <path d="M452 72.5 h6 l-3-3.5z M452 96 h6 l-3 3.5z" fill="#6e6e6e"/>
  <!-- none swatch -->
 <rect x="257" y="65" width="11.3" height="11.8" fill="#fff" stroke="#999" stroke-width="0.8"/>
 <path d="M258 76 L267.5 66" stroke="#dd1f2a" stroke-width="1.8"/>
 <rect x="268.3" y="65" width="12.8" height="11.8" fill="#f4f4f4"/>
 <circle cx="274.7" cy="70.9" r="3.3" fill="none" stroke="#333" stroke-width="1"/>
 <path d="M269.5 70.9 h10.5 M274.7 66 v10" stroke="#333" stroke-width="0.9"/>
 <!-- folder -->
 <path d="M258 81.5 h4 l1 1.2 h5 v6.8 h-10z" fill="#a8a8a8"/>
 <rect x="269.40" y="78.5" width="12.45" height="12.2" fill="#982a9c"/><path d="M274.90 90.7 L281.85 84.5 L281.85 90.7 Z" fill="#fff"/><circle cx="279.00" cy="88.3" r="1.2" fill="#000"/><rect x="281.85" y="78.5" width="12.45" height="12.2" fill="#d93aa6"/><path d="M287.35 90.7 L294.30 84.5 L294.30 90.7 Z" fill="#fff"/><circle cx="291.45" cy="88.3" r="1.2" fill="#000"/><rect x="294.30" y="78.5" width="12.45" height="12.2" fill="#ee85c2"/><path d="M299.80 90.7 L306.75 84.5 L306.75 90.7 Z" fill="#fff"/><circle cx="303.90" cy="88.3" r="1.2" fill="#000"/><rect x="306.75" y="78.5" width="12.45" height="12.2" fill="#f47a22"/><path d="M312.25 90.7 L319.20 84.5 L319.20 90.7 Z" fill="#fff"/><circle cx="316.35" cy="88.3" r="1.2" fill="#000"/><rect x="319.20" y="78.5" width="12.45" height="12.2" fill="#fbb419"/><path d="M324.70 90.7 L331.65 84.5 L331.65 90.7 Z" fill="#fff"/><circle cx="328.80" cy="88.3" r="1.2" fill="#000"/><rect x="331.65" y="78.5" width="12.45" height="12.2" fill="#4db8e4"/><path d="M337.15 90.7 L344.10 84.5 L344.10 90.7 Z" fill="#fff"/><circle cx="341.25" cy="88.3" r="1.2" fill="#000"/><rect x="344.10" y="78.5" width="12.45" height="12.2" fill="#2f8fd2"/><path d="M349.60 90.7 L356.55 84.5 L356.55 90.7 Z" fill="#fff"/><circle cx="353.70" cy="88.3" r="1.2" fill="#000"/><rect x="356.55" y="78.5" width="12.45" height="12.2" fill="#7bc143"/><path d="M362.05 90.7 L369.00 84.5 L369.00 90.7 Z" fill="#fff"/><circle cx="366.15" cy="88.3" r="1.2" fill="#000"/><rect x="369.00" y="78.5" width="12.45" height="12.2" fill="#48a049"/><path d="M374.50 90.7 L381.45 84.5 L381.45 90.7 Z" fill="#fff"/><circle cx="378.60" cy="88.3" r="1.2" fill="#000"/><rect x="381.45" y="78.5" width="12.45" height="12.2" fill="#e8254f"/><path d="M386.95 90.7 L393.90 84.5 L393.90 90.7 Z" fill="#fff"/><circle cx="391.05" cy="88.3" r="1.2" fill="#000"/>
 <!-- bottom icons -->
 <g fill="none" stroke="#cfcfcf" stroke-width="1.2"><path d="M262.5 109 v9 M265 108 v10 M267.5 108.5 l3 9"/></g>
 <path d="M270 117 h4 l-2 2z" fill="#cfcfcf"/>
 <g fill="none" stroke="#cfcfcf" stroke-width="1.4"><path d="M293 109 l-4 4.5 4 4.5 M296 109.5 l-3 4 3 4"/></g>
 <g fill="#dcdcdc"><rect x="335.5" y="108" width="3" height="3"/><rect x="339.5" y="108" width="3" height="3"/><rect x="335.5" y="112" width="3" height="3"/><rect x="339.5" y="112" width="3" height="3"/><rect x="335.5" y="116" width="3" height="3"/><rect x="339.5" y="116" width="3" height="3"/><rect x="343.5" y="108" width="3" height="3"/><rect x="343.5" y="112" width="3" height="3"/></g>
 <path d="M345 117.5 h4 l-2 2z" fill="#cfcfcf"/>
 <rect x="361" y="109" width="9" height="10" fill="none" stroke="#6a6a6a" stroke-width="1"/>
 <path d="M383.5 109 h4 l1 1.5 h6 v8.5 h-11z" fill="#b8b8b8"/>
 <path d="M408 110 h9 v9 h-7 v-5 h-2z" fill="#707070"/>
 <path d="M430 110 h10 M431.5 111.5 h7 v7.5 h-7z M433 108.5 h4" fill="none" stroke="#6a6a6a" stroke-width="1.2"/>
 <g fill="#2e2e2e"><path d="M462 110 v9 h-9z"/></g>
 <g stroke="#777" stroke-width="0.8"><path d="M455.5 118.5 l6-6 M458.5 118.5 l3-3"/></g>
 <!-- bottom strip -->
 <rect x="252" y="122.5" width="213" height="7.5" fill="#484848"/>
 <rect x="252" y="122.5" width="213" height="1" fill="#3a3a3a"/>
 <rect x="350" y="125" width="14" height="3" fill="#1e1e1e"/>
</svg>
<div class="a" style="left:251px;top:130px;width:6px;height:463px;background:linear-gradient(90deg,#cfcfcf,rgba(235,235,235,.6) 30%,rgba(255,255,255,0))"></div>
<svg class="a" style="left:0;top:0" width="600" height="6"><path d="M33 0 l2.2 2.4 2.2-2.4z M248 0 l2.2 2.4 2.2-2.4z" fill="#f0f0f0"/></svg>
<!-- Dialog -->
<div class="a" style="left:276px;top:146px;width:314px;height:136px;background:#4b4b4b;border-radius:5px;box-shadow:0 6px 22px rgba(0,0,0,.28),0 0 2px rgba(0,0,0,.45)"></div>
<div class="a" style="left:276px;top:146px;width:314px;height:19px;background:linear-gradient(#ededed,#d4d4d4);border-radius:5px 5px 0 0;border-bottom:1px solid #9a9a9a"></div>
<div class="t" style="left:276px;width:314px;text-align:center;top:151px;font-size:12px;color:#4a4a4a;letter-spacing:0.1px;-webkit-text-stroke:0">Pucker &amp; Bloat</div>
<svg class="a" style="left:276px;top:165px" width="314" height="117" viewBox="276 165 314 117">
 <rect x="290" y="192.5" width="222" height="3.5" fill="#2c2c2c"/>
 <rect x="400.5" y="186" width="1" height="3.5" fill="#222"/>
 <path d="M421.5 199.5 v-6 l4-4.2 4 4.2 v6 z" fill="#606060" stroke="#d9822e" stroke-width="1"/>
 <rect x="516.5" y="184.5" width="59.5" height="18.5" fill="#3a3a3a" stroke="#d98a3c" stroke-width="1"/>
 <rect x="518" y="186" width="56.5" height="15.5" fill="#b4b4b4"/>
 <rect x="290.5" y="238.5" width="10" height="10" fill="#3e3e3e" stroke="#2e2e2e" stroke-width="1"/>
 <path d="M292 243 l3 3.5 l5.5 -8" fill="none" stroke="#e8e8e8" stroke-width="1.6"/>
 <rect x="409.5" y="234.5" width="79.5" height="20.5" rx="1.5" fill="#2e2e2e"/>
 <rect x="410.5" y="235.5" width="77.5" height="18.5" rx="1" fill="url(#btng)"/>
 <rect x="495" y="234.5" width="81" height="20.5" rx="1.5" fill="#1e1e1e"/>
 <rect x="496.5" y="236" width="78" height="17.5" rx="1" fill="url(#btng)"/>
 <defs><linearGradient id="btng" x1="0" x2="0" y1="0" y2="1"><stop offset="0" stop-color="#606060"/><stop offset="1" stop-color="#545454"/></linearGradient></defs>
</svg>
<div class="t" style="left:289.8px;top:204.1px;font-size:9.2px;color:#ececec;letter-spacing:-0.1px">Pucker</div>
<div class="t" style="left:490.6px;top:204.7px;font-size:9.2px;color:#ececec;letter-spacing:-0.05px">Bloat</div>
<div class="t" style="left:521px;top:189.7px;font-size:11px;color:#111;letter-spacing:-0.3px">47%</div>
<div class="a" style="left:540.5px;top:187px;width:1px;height:13px;background:#111"></div>
<div class="t" style="left:304.6px;top:238.9px;font-size:11px;color:#ececec;letter-spacing:-0.15px">Preview</div>
<div class="t" style="left:409.5px;width:79.5px;text-align:center;top:240.7px;font-size:11px;color:#ececec">Cancel</div>
<div class="t" style="left:495px;width:81px;text-align:center;top:240.7px;font-size:11px;color:#ececec">OK</div>
</body></html>
